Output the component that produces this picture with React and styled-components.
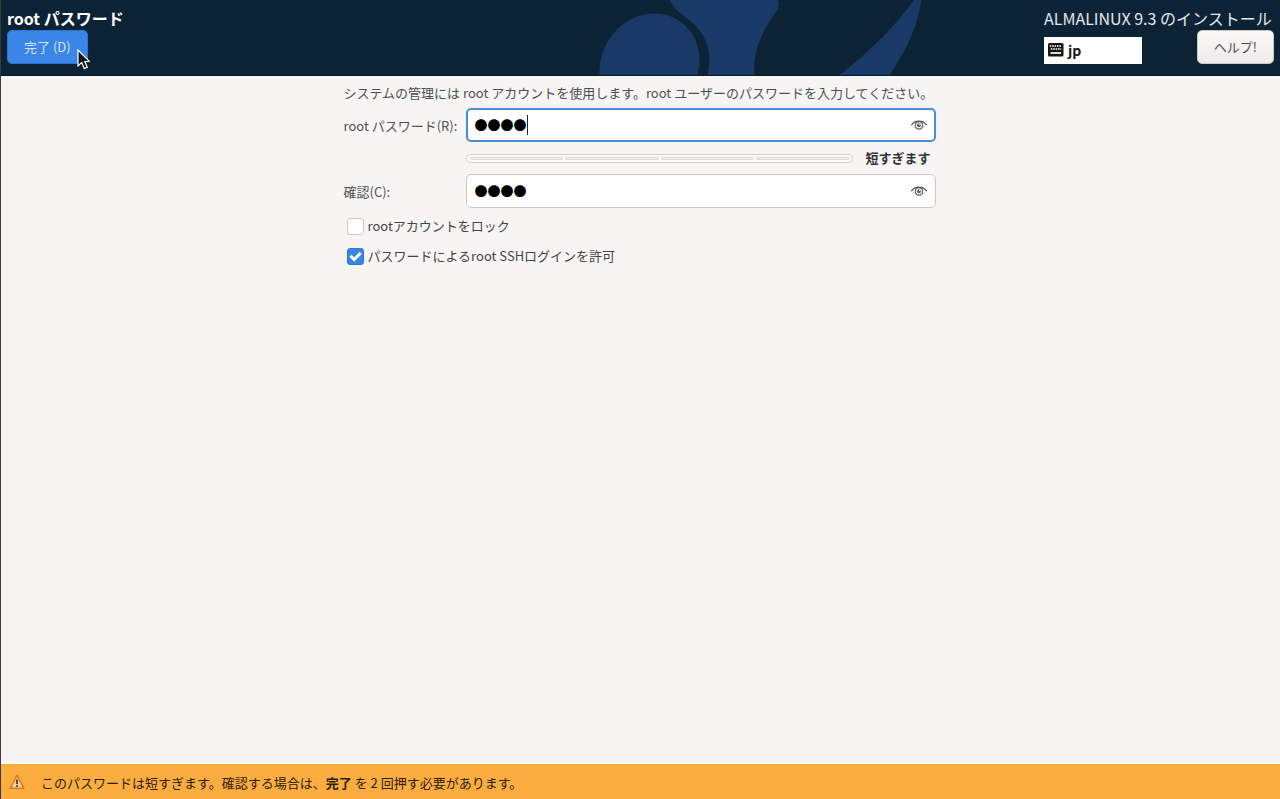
import React, { useState } from 'react';
import styled, { createGlobalStyle } from 'styled-components';

const GlobalStyle = createGlobalStyle`
  * { box-sizing: border-box; }
  body { margin: 0; background: #f6f5f4; }
  body, button, input { font-family: "Noto Sans CJK JP", "Noto Sans", sans-serif; font-size: 13px; line-height: 20px; color: #2e3436; }
`;

const Page = styled.div`min-height:100vh;display:flex;flex-direction:column;border-left:1px solid #3a3a3a;`;

const Header = styled.header`position:relative;display:flex;justify-content:space-between;height:76px;padding:7px 6px 0;background:#0c2336;border-bottom:1px solid #081a29;color:#fff;`;
const Backdrop = styled.svg`position:absolute;top:0;left:0;width:100%;height:100%;`;
const HeaderSide = styled.div`position:relative;display:flex;flex-direction:column;align-items:flex-start;gap:1px;min-width:230px;`;
const HeaderRow = styled.div`display:flex;justify-content:space-between;align-items:flex-start;width:100%;`;
const Title = styled.h1`margin:0;font-size:16px;line-height:22px;font-weight:${p => (p.$light ? 400 : 700)};color:${p => (p.$light ? '#e3e8ec' : '#fff')};`;
const Button = styled.button`
  height:34px;
  padding:0 16px;
  border-radius:5px;
  border:1px solid ${p => (p.$primary ? '#2c74cf' : '#cdc7c2')};
  background:${p => (p.$primary ? '#3986e8' : 'linear-gradient(#f9f8f7, #eeecea)')};
  color:${p => (p.$primary ? '#d4e5fb' : '#4a4f51')};
`;
const Layout = styled.button`display:flex;align-items:center;gap:4px;width:98px;height:27px;margin-top:7px;padding:0 4px 2px;border:0;background:#fff;font-size:14px;font-weight:700;color:#1a1a1a;`;
const Cursor = styled.svg`position:absolute;left:70px;top:42px;pointer-events:none;`;

const Main = styled.main`flex:1;padding:7px 17px 7px 15px;`;
const Form = styled.form`width:100%;max-width:592px;margin:0 auto;`;
const Intro = styled.p`margin:0 0 5px;color:#4a4f51;`;
const Fields = styled.div`display:grid;grid-template-columns:116px 1fr;column-gap:6px;align-items:center;`;
const Label = styled.label`padding-top:2px;color:#4a4f51;white-space:nowrap;`;
const Entry = styled.div`position:relative;display:flex;align-items:center;height:34px;border-radius:5px;background:#fff;border:${p => (p.$focused ? '2px solid #4a8bdc' : '1px solid #cdc7c2')};padding:${p => (p.$focused ? '0 5px 0 7px' : '0 6px 0 8px')};`;
const Input = styled.input`flex:1;min-width:0;padding:0;border:0;outline:0;background:transparent;color:#000;caret-color:transparent;`;
const Caret = styled.span`position:absolute;left:59px;top:5px;width:1px;height:20px;background:#222;`;
const IconButton = styled.button`display:flex;padding:0;border:0;background:none;`;
const Strength = styled.div`grid-column:2;display:flex;align-items:center;gap:12px;height:32px;padding-right:5px;`;
const Meter = styled.div`flex:1;display:flex;gap:2px;height:9px;padding:2px 3px;border:1px solid #d5d0cc;border-radius:4px;background:#fbfbfa;`;
const Segment = styled.span`flex:1;border:1px solid #dedad7;border-radius:2px;background:#f0efed;`;
const StrengthText = styled.strong`color:#2e3436;`;
const Checks = styled.div`display:flex;flex-direction:column;padding:3px 0 0 3px;`;
const CheckRow = styled.label`display:flex;align-items:center;gap:4px;height:30px;color:#3f4446;`;
const Checkbox = styled.input`
  appearance:none;
  flex:none;
  width:17px;
  height:17px;
  margin:0;
  border:1px solid #cdc7c2;
  border-radius:3px;
  background:#fff;
  &:checked {
    border-color:#2f78d0;
    background:#3986e8 url("data:image/svg+xml,%3Csvg xmlns='http://www.w3.org/2000/svg' viewBox='0 0 15 15'%3E%3Cpath d='M2.500 6.800l3.700 3.700L12.700 4' fill='none' stroke='white' stroke-width='3'/%3E%3C/svg%3E") center / 15px no-repeat;
  }
`;

const Warning = styled.footer`display:flex;align-items:center;gap:16px;height:35px;padding:0 8px;background:#fbad3f;color:#2d2009;`;
const WarningText = styled.p`margin:0;padding-top:2px;`;

function EyeIcon() {
  return (
    <svg width="20" height="16" viewBox="0 0 20 16" fill="none" stroke="#55595b">
      <path d="M2.300 8.200C4.500 4.800 7 4.100 10 4.100s5.500 .7 7.700 4.100" strokeWidth="1.200" />
      <path d="M4 8.700C6 11.500 8 12.300 10 12.300s4-.8 6-3.600" strokeWidth=".6" opacity=".6" />
      <circle cx="10" cy="8.300" r="3.700" strokeWidth="1.100" />
      <circle cx="10" cy="8.300" r="2" fill="#55595b" stroke="none" />
      <circle cx="10.800" cy="7.500" r=".8" fill="#fff" stroke="none" />
    </svg>
  );
}

function KeyboardIcon() {
  return (
    <svg width="16" height="14" viewBox="0 0 16 14">
      <rect x="0" y="0" width="15.500" height="13.500" rx="1.500" fill="#161616" />
      <path d="M1.800 3h12M2.800 6h10.500" stroke="#fff" strokeWidth="1.700" strokeDasharray="1.600 .8" />
      <path d="M2.500 10h10.500" stroke="#fff" strokeWidth="1.700" />
    </svg>
  );
}

function WarningIcon() {
  return (
    <svg width="16" height="16" viewBox="0 0 16 16">
      <path d="M8 1.500 14.800 14.300H1.200Z" fill="#f3d3a4" stroke="#e2741c" strokeWidth="1.500" strokeLinejoin="round" />
      <path d="M8 5.500v4.500M8 11v1.700" stroke="#40352b" strokeWidth="1.700" />
    </svg>
  );
}

function PasswordEntry({ id, label, focused, value, onChange }) {
  return (
    <>
      <Label htmlFor={id}>{label}</Label>
      <Entry $focused={focused}>
        <Input id={id} value={value} autoComplete="off" onChange={e => onChange('●'.repeat(e.target.value.length))} />
        {focused && <Caret />}
        <IconButton type="button" aria-label="パスワードを表示">
          <EyeIcon />
        </IconButton>
      </Entry>
    </>
  );
}

export default function App() {
  const [password, setPassword] = useState('●●●●');
  const [confirm, setConfirm] = useState('●●●●');

  return (
    <>
      <GlobalStyle />
      <Page>
        <Header>
          <Backdrop viewBox="0 0 1280 76" preserveAspectRatio="xMidYMid slice" fill="#193a66">
            <path d="M599 76C597 42 624 14 654 14C684 14 706 42 697 76Z" />
            <path d="M669 0C676 15 690 18 700 32C709 45 711 60 707 76H754C752 48 764 29 776 12C779 7 779 3 777 0Z" />
            <path d="M839 76C868 53 895 27 914 0H921C918 26 906 51 889 76Z" />
          </Backdrop>
          <HeaderSide>
            <Title>root パスワード</Title>
            <Button type="button" $primary>完了 (D)</Button>
            <Cursor width="13" height="21" viewBox="0 0 13 21">
              <path d="M1 1v16l3.700-3.400 2.600 6 3-1.300-2.600-5.800h4.800Z" fill="#111" stroke="#fff" strokeWidth="1.200" />
            </Cursor>
          </HeaderSide>
          <HeaderSide>
            <Title as="h2" $light>ALMALINUX 9.3 のインストール</Title>
            <HeaderRow>
              <Layout type="button">
                <KeyboardIcon />
                jp
              </Layout>
              <Button type="button">ヘルプ!</Button>
            </HeaderRow>
          </HeaderSide>
        </Header>

        <Main>
          <Form onSubmit={e => e.preventDefault()}>
            <Intro>システムの管理には root アカウントを使用します。root ユーザーのパスワードを入力してください。</Intro>
            <Fields>
              <PasswordEntry id="password" label="root パスワード(R):" focused value={password} onChange={setPassword} />
              <Strength>
                <Meter>
                  {[0, 1, 2, 3].map(i => <Segment key={i} />)}
                </Meter>
                <StrengthText>短すぎます</StrengthText>
              </Strength>
              <PasswordEntry id="confirm" label="確認(C):" value={confirm} onChange={setConfirm} />
            </Fields>
            <Checks>
              <CheckRow>
                <Checkbox type="checkbox" />
                rootアカウントをロック
              </CheckRow>
              <CheckRow>
                <Checkbox type="checkbox" defaultChecked />
                パスワードによるroot SSHログインを許可
              </CheckRow>
            </Checks>
          </Form>
        </Main>

        <Warning>
          <WarningIcon />
          <WarningText>
            このパスワードは短すぎます。確認する場合は、<b>完了</b> を 2 回押す必要があります。
          </WarningText>
        </Warning>
      </Page>
    </>
  );
}
